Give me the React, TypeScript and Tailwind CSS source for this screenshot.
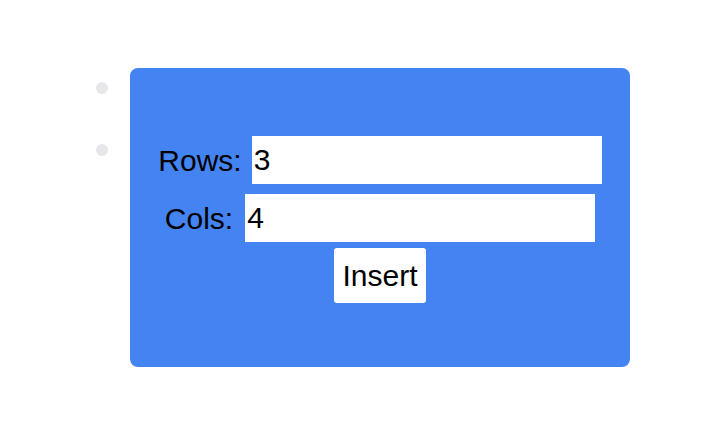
import React from "react";

export default function App() {
  return (
    <div className="w-[714px] h-[444px] bg-white relative" style={{ fontFamily: '"Liberation Sans", Arial, sans-serif' }}>
      <div className="flex pt-[68px] pl-[96px]">
        <div className="flex flex-col gap-[50px] pt-[14px] w-[34px]">
          <div className="w-[12px] h-[12px] rounded-full bg-[#e5e7eb]" />
          <div className="w-[12px] h-[12px] rounded-full bg-[#e5e7eb]" />
        </div>
        <div className="w-[500px] h-[299px] bg-[#4483f2] rounded-[8px] flex flex-col items-center justify-center pt-[4px] text-[30px] text-black">
          <div className="flex items-center gap-[10px]">
            <span>Rows:</span>
            <input className="w-[350px] h-[48px] bg-white px-[2px] text-[30px] outline-none" defaultValue="3" />
          </div>
          <div className="flex items-center gap-[12px] mt-[10px]">
            <span>Cols:</span>
            <input className="w-[350px] h-[48px] bg-white px-[2px] text-[30px] outline-none" defaultValue="4" />
          </div>
          <button className="mt-[6px] h-[55px] w-[92px] bg-white rounded-[3px] text-[30px]">Insert</button>
        </div>
      </div>
    </div>
  );
}
